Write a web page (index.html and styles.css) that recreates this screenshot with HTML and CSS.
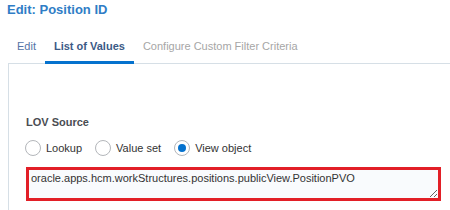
FILE: index.html
```html
<!DOCTYPE html>
<html lang="en">
<head>
    <meta charset="UTF-8">
    <title>Edit: Position ID</title>
    <link rel="stylesheet" href="styles.css">
</head>
<body>
    <h1 class="title">Edit: Position ID</h1>
    <div class="editor">
        <div class="tabs">
            <div class="tab">Edit</div>
            <div class="tab active">List of Values</div>
            <div class="tab disabled">Configure Custom Filter Criteria</div>
        </div>
        <div class="panel">
            <div class="label">LOV Source</div>
            <div class="radios">
                <label class="radio"><span class="dot"></span>Lookup</label>
                <label class="radio"><span class="dot"></span>Value set</label>
                <label class="radio"><span class="dot checked"></span>View object</label>
            </div>
            <textarea class="source" spellcheck="false">oracle.apps.hcm.workStructures.positions.publicView.PositionPVO</textarea>
        </div>
    </div>
</body>
</html>
```

FILE: styles.css
```css
body {
    margin: 0;
    padding: 0;
    font-family: "Liberation Sans", Arial, sans-serif;
    font-size: 11px;
    color: #333;
    background: #fff;
    overflow: hidden;
}

.title {
    margin: 0;
    padding: 2px 0 0 7px;
    font-size: 13px;
    line-height: 15px;
    font-weight: bold;
    color: #2f7dc6;
}

.editor {
    margin: 23px 0 0 8px;
}

.tabs {
    display: flex;
    border-bottom: 1px solid #d6dfe6;
}

.tab {
    padding: 0 9px 8px;
    line-height: 13px;
    color: #5473a6;
    border-bottom: 3px solid transparent;
    margin-bottom: -1px;
    white-space: nowrap;
}

.tab.active {
    font-weight: bold;
    color: #3b5a86;
    border-bottom-color: #0572ce;
}

.tab.disabled {
    color: #a6a6a6;
}

.panel {
    border-left: 1px solid #d6dfe6;
    padding: 52px 0 9px 17px;
}

.label {
    font-weight: bold;
    line-height: 13px;
    color: #4a4d52;
}

.radios {
    display: flex;
    align-items: center;
    height: 16px;
    margin: 11px 0 0 -1px;
}

.radio {
    display: flex;
    align-items: center;
    margin-right: 13px;
    color: #333;
}

.dot {
    width: 14px;
    height: 14px;
    border: 1px solid #b3b6ba;
    border-radius: 50%;
    background: #fff;
    margin-right: 5px;
    position: relative;
}

.dot.checked::after {
    content: "";
    position: absolute;
    top: 3px;
    left: 3px;
    width: 8px;
    height: 8px;
    border-radius: 50%;
    background: #0572ce;
}

.source {
    display: block;
    box-sizing: border-box;
    width: 415px;
    height: 34px;
    margin-top: 11px;
    padding: 2px 2px;
    border: 3px solid #e21f27;
    background: #f9fbfd;
    font-family: "Liberation Sans", Arial, sans-serif;
    font-size: 11px;
    line-height: 13px;
    color: #333;
    resize: both;
    outline: none;
}
```
